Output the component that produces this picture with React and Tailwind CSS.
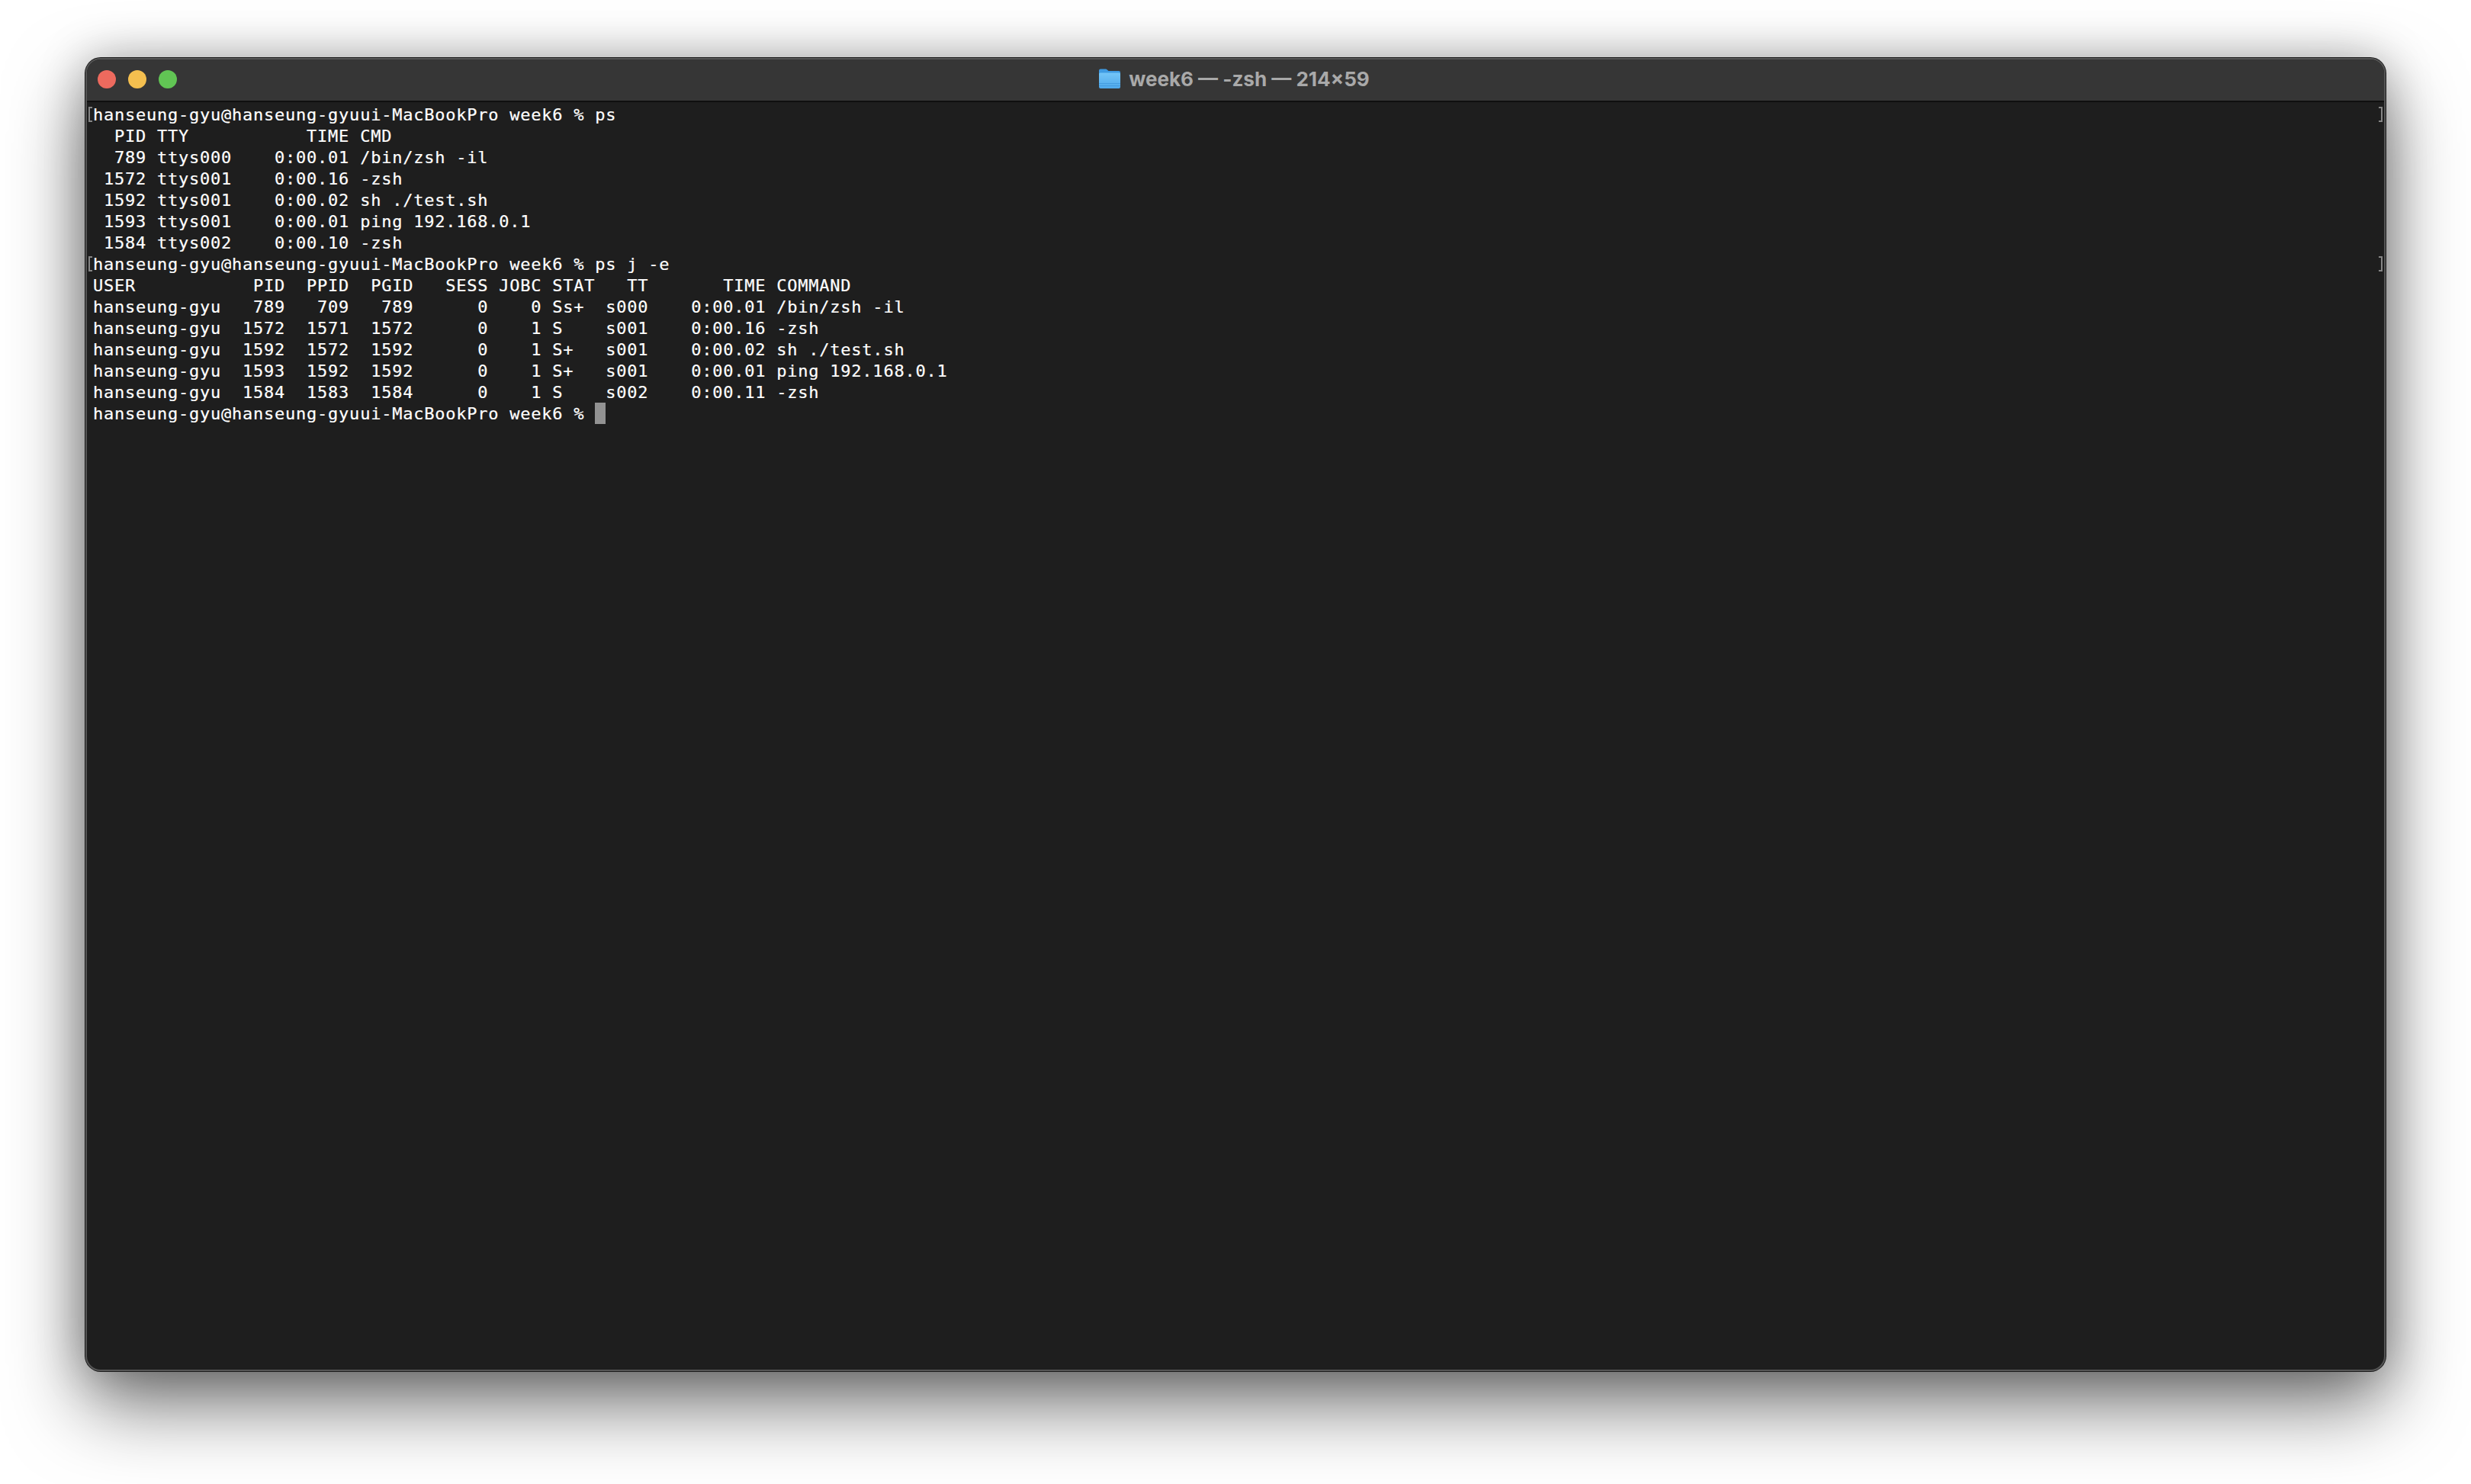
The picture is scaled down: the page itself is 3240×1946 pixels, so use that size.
const lines = [
  { text: "hanseung-gyu@hanseung-gyuui-MacBookPro week6 % ps", mark: true },
  { text: "  PID TTY           TIME CMD" },
  { text: "  789 ttys000    0:00.01 /bin/zsh -il" },
  { text: " 1572 ttys001    0:00.16 -zsh" },
  { text: " 1592 ttys001    0:00.02 sh ./test.sh" },
  { text: " 1593 ttys001    0:00.01 ping 192.168.0.1" },
  { text: " 1584 ttys002    0:00.10 -zsh" },
  { text: "hanseung-gyu@hanseung-gyuui-MacBookPro week6 % ps j -e", mark: true },
  { text: "USER           PID  PPID  PGID   SESS JOBC STAT   TT       TIME COMMAND" },
  { text: "hanseung-gyu   789   709   789      0    0 Ss+  s000    0:00.01 /bin/zsh -il" },
  { text: "hanseung-gyu  1572  1571  1572      0    1 S    s001    0:00.16 -zsh" },
  { text: "hanseung-gyu  1592  1572  1592      0    1 S+   s001    0:00.02 sh ./test.sh" },
  { text: "hanseung-gyu  1593  1592  1592      0    1 S+   s001    0:00.01 ping 192.168.0.1" },
  { text: "hanseung-gyu  1584  1583  1584      0    1 S    s002    0:00.11 -zsh" },
  { text: "hanseung-gyu@hanseung-gyuui-MacBookPro week6 % ", cursor: true },
];

const FolderIcon = () => (
  <svg width="28" height="26" viewBox="0 0 28 26" className="shrink-0">
    <defs>
      <linearGradient id="folderFront" x1="0" y1="0" x2="0" y2="1">
        <stop offset="0" stopColor="#74c6f8" />
        <stop offset="1" stopColor="#4fa8ea" />
      </linearGradient>
    </defs>
    <path d="M0 2.5a2 2 0 0 1 2-2h6.5c1 0 1.5.4 2.2 1l1.8 1.5H26a2 2 0 0 1 2 2V8H0z" fill="#3f9be3" />
    <path d="M0 7a1.5 1.5 0 0 1 1.500-1.500h25A1.500 1.500 0 0 1 28 7v17a2 2 0 0 1-2 2H2a2 2 0 0 1-2-2z" fill="url(#folderFront)" />
    <path d="M0 19h28v.8H0zM0 22h28v.8H0z" fill="#3f97dc" />
  </svg>
);

const Row = ({ line }) => (
  <div className="relative h-[28px] pl-[8px] leading-[28px] whitespace-pre">
    {line.mark && (
      <>
        <span className="absolute left-[2px] top-[3px] h-[20px] w-[5px] border-y-2 border-l-2 border-[#858585]" />
        <span className="absolute right-[2px] top-[3px] h-[20px] w-[5px] border-y-2 border-r-2 border-[#858585]" />
      </>
    )}
    {line.text}
    {line.cursor && <span className="relative -top-px inline-block h-[28px] w-[14px] bg-[#929292] align-top" />}
  </div>
);

export default function App() {
  return (
    <div className="h-[1946px] w-full overflow-hidden bg-white pl-[112px] pt-[76px]">
      <div className="flex h-[1722px] w-[3016px] flex-col overflow-hidden rounded-[20px] border-2 border-[#555555] bg-[#1e1e1e] shadow-[0_0_0_1px_#1a1a1a,0_44px_100px_rgba(0,0,0,0.55),0_0_60px_rgba(0,0,0,0.25)]">
        <div className="relative flex h-[56px] shrink-0 items-center justify-center border-b-2 border-[#0f0f0f] bg-[#363636] pb-[4px] pr-[3px]">
          <div className="absolute left-[14px] top-[14px] flex gap-[16px]">
            <span className="h-[24px] w-[24px] rounded-full bg-[#ed6a5e]" />
            <span className="h-[24px] w-[24px] rounded-full bg-[#f4bf4f]" />
            <span className="h-[24px] w-[24px] rounded-full bg-[#61c554]" />
          </div>
          <div className="flex items-center gap-[11px] font-['Inter',sans-serif] text-[26px] font-bold text-[#a9a9a9]">
            <FolderIcon />
            <span>week6 — -zsh — 214×59</span>
          </div>
        </div>
        <div className="pt-[3px] font-['DejaVu_Sans_Mono',monospace] text-[22px] tracking-[0.76px] text-white [-webkit-text-stroke:0.2px_white]">
          {lines.map((line, i) => (
            <Row key={i} line={line} />
          ))}
        </div>
      </div>
    </div>
  );
}
